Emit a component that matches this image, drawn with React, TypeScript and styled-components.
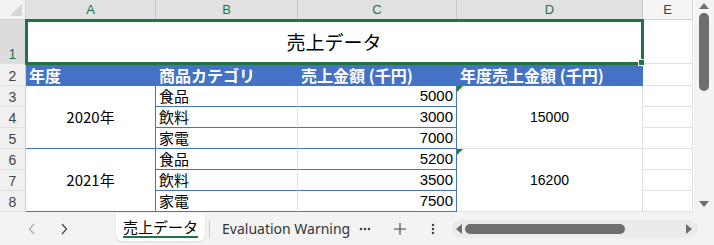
import React from 'react'
import styled, { createGlobalStyle, css } from 'styled-components'

const GlobalStyle = createGlobalStyle`
  html, body { margin: 0; padding: 0; background: #fff; }
  body { font-family: 'Noto Sans CJK JP', 'Noto Sans', sans-serif; }
`

const GRID = '#e1e1e1'
const BLUE = '#4472c4'
const GREEN = '#217346'

const Frame = styled.div`
  width: 714px;
  height: 245px;
  display: flex;
  flex-direction: column;
  overflow: hidden;
`
const Main = styled.div`
  display: flex;
  height: 212px;
`
const Sheet = styled.div`
  display: grid;
  grid-template-columns: 26px 130px 142px 159px 186px 50px;
  grid-template-rows: 20px 44px 22px repeat(6, 21px);
  width: 694px;
  background: #fff;
`
const Corner = styled.div`
  background: #f3f3f3;
  border-right: 1px solid #d0d0d0;
  border-bottom: 1px solid #d0d0d0;
  position: relative;
  &::after {
    content: '';
    position: absolute;
    right: 3px;
    bottom: 3px;
    border-left: 12px solid transparent;
    border-bottom: 12px solid #d6d6d6;
  }
`
const ColHead = styled.div<{ $sel?: boolean }>`
  background: ${(p) => (p.$sel ? '#e1e1e1' : '#f5f5f5')};
  color: ${(p) => (p.$sel ? GREEN : '#444')};
  border-right: 1px solid ${(p) => (p.$sel ? '#c8c8c8' : '#d4d4d4')};
  border-bottom: 1px solid ${(p) => (p.$sel ? '#c8c8c8' : '#d4d4d4')};
  font-family: 'Liberation Sans', sans-serif;
  font-size: 13px;
  display: flex;
  align-items: center;
  justify-content: center;
`
const RowHead = styled.div<{ $sel?: boolean }>`
  background: ${(p) => (p.$sel ? '#dcdcdc' : '#f0f0f0')};
  color: ${(p) => (p.$sel ? GREEN : '#444')};
  border-right: 1px solid #d0d0d0;
  border-bottom: 1px solid #e0e0e0;
  font-family: 'Liberation Sans', sans-serif;
  font-size: 14px;
  display: flex;
  align-items: flex-end;
  justify-content: center;
  padding-bottom: 1px;
  box-sizing: border-box;
`
const Cell = styled.div<{
  $align?: 'left' | 'right' | 'center'
  $right?: string
  $bottom?: string
  $span?: number
}>`
  position: relative;
  box-sizing: border-box;
  border-right: 1px solid ${(p) => p.$right || GRID};
  border-bottom: 1px solid ${(p) => p.$bottom || GRID};
  display: flex;
  align-items: flex-end;
  justify-content: ${(p) =>
    p.$align === 'right' ? 'flex-end' : p.$align === 'center' ? 'center' : 'flex-start'};
  padding: 0 3px;
  font-size: 15px;
  line-height: 20px;
  color: #000;
  white-space: nowrap;
  ${(p) => p.$span && css`grid-row: span ${p.$span}; align-items: center;`}
`
const Num = styled.span<{ $small?: boolean }>`
  font-family: 'Liberation Sans', sans-serif;
  font-size: ${(p) => (p.$small ? '14px' : '15px')};
`
const Title = styled(Cell)`
  grid-column: span 4;
  align-items: center;
  justify-content: center;
  font-size: 19px;
  outline: 3px solid ${GREEN};
  outline-offset: -2px;
  z-index: 1;
  &::after {
    content: '';
    position: absolute;
    right: -3px;
    bottom: -3px;
    width: 5px;
    height: 5px;
    background: ${GREEN};
    border: 1px solid #fff;
  }
`
const HeadCell = styled(Cell)`
  background: ${BLUE};
  color: #fff;
  font-weight: bold;
  font-size: 16px;
  align-items: center;
  border-right-color: ${BLUE};
  border-bottom-color: ${BLUE};
`
const Flag = styled.i`
  position: absolute;
  left: 0;
  top: 0;
  border-right: 6px solid transparent;
  border-top: 6px solid #1a8a1a;
`

const VScroll = styled.div`
  width: 20px;
  background: #f3f3f3;
  display: flex;
  flex-direction: column;
  align-items: center;
  padding: 3px 0 5px;
  box-sizing: border-box;
`
const Arrow = styled.div<{ $dir: 'up' | 'down' | 'left' | 'right' }>`
  width: 0;
  height: 0;
  ${(p) =>
    p.$dir === 'up'
      ? css`border-left: 5px solid transparent; border-right: 5px solid transparent; border-bottom: 6px solid #6e6e6e;`
      : p.$dir === 'down'
      ? css`border-left: 5px solid transparent; border-right: 5px solid transparent; border-top: 6px solid #6e6e6e;`
      : p.$dir === 'left'
      ? css`border-top: 5px solid transparent; border-bottom: 5px solid transparent; border-right: 6px solid #6e6e6e;`
      : css`border-top: 5px solid transparent; border-bottom: 5px solid transparent; border-left: 6px solid #6e6e6e;`}
`
const VThumb = styled.div`
  width: 10px;
  height: 78px;
  background: #6e6e6e;
  border-radius: 5px;
  margin-top: 4px;
`
const Spacer = styled.div<{ $w?: number }>`
  flex: ${(p) => (p.$w ? `0 0 ${p.$w}px` : '1')};
`

const TabBar = styled.div`
  height: 33px;
  background: #f3f3f3;
  display: flex;
  align-items: center;
  font-size: 14px;
  color: #333;
`
const NavBtn = styled.div<{ $dim?: boolean }>`
  width: 32px;
  display: flex;
  justify-content: center;
  color: ${(p) => (p.$dim ? '#aaa' : '#444')};
`
const Tab = styled.div`
  height: 28px;
  margin-top: -4px;
  padding: 0 7px;
  display: flex;
  align-items: center;
  position: relative;
  font-size: 15px;
  color: #000;
  background: #fff;
  border-radius: 0 0 6px 6px;
  box-shadow: 0 1px 2px rgba(0, 0, 0, 0.12);
  &::after {
    content: '';
    position: absolute;
    left: 7px;
    right: 7px;
    bottom: 3px;
    height: 2px;
    background: ${GREEN};
  }
`
const TabText = styled.span`
  font-family: 'Noto Sans', 'Noto Sans CJK JP', sans-serif;
  font-size: 14px;
  color: #333;
  margin-left: 12px;
`
const Sep = styled.div`
  width: 1px;
  height: 18px;
  background: #c8c8c8;
  margin-left: 4px;
`
const IconBtn = styled.div<{ $w: number }>`
  width: ${(p) => p.$w}px;
  display: flex;
  justify-content: center;
  align-items: center;
  color: #444;
`
const HScroll = styled.div`
  margin-left: 6px;
  width: 246px;
  height: 18px;
  background: #ebebeb;
  border-radius: 9px;
  display: flex;
  align-items: center;
  padding: 0 6px 0 4px;
  box-sizing: border-box;
  gap: 3px;
`
const HThumb = styled.div`
  width: 160px;
  height: 10px;
  background: #6e6e6e;
  border-radius: 5px;
`

const cols = ['A', 'B', 'C', 'D', 'E']
const years = [
  { year: '2020年', total: '15000', rows: [['食品', '5000'], ['飲料', '3000'], ['家電', '7000']] },
  { year: '2021年', total: '16200', rows: [['食品', '5200'], ['飲料', '3500'], ['家電', '7500']] },
]

const App: React.FC = () => {
  return (
    <Frame>
      <GlobalStyle />
      <Main>
        <Sheet>
          <Corner />
          {cols.map((c, i) => (
            <ColHead key={c} $sel={i < 4}>
              {c}
            </ColHead>
          ))}

          <RowHead $sel>1</RowHead>
          <Title>売上データ</Title>
          <Cell />

          <RowHead>2</RowHead>
          <HeadCell>年度</HeadCell>
          <HeadCell>商品カテゴリ</HeadCell>
          <HeadCell>売上金額 (千円)</HeadCell>
          <HeadCell>年度売上金額 (千円)</HeadCell>
          <Cell />

          {years.map((y, yi) =>
            y.rows.map(([cat, amt], ri) => {
              const n = 3 + yi * 3 + ri
              return (
                <React.Fragment key={n}>
                  <RowHead>{n}</RowHead>
                  {ri === 0 && (
                    <Cell $span={3} $align="center" $right={BLUE} $bottom={BLUE}>
                      {y.year}
                    </Cell>
                  )}
                  <Cell $right={GRID} $bottom={BLUE}>
                    {cat}
                  </Cell>
                  <Cell $align="right" $right={BLUE} $bottom={BLUE}>
                    <Num>{amt}</Num>
                  </Cell>
                  {ri === 0 && (
                    <Cell $span={3} $align="center">
                      <Flag />
                      <Num $small>{y.total}</Num>
                    </Cell>
                  )}
                  <Cell />
                </React.Fragment>
              )
            })
          )}
        </Sheet>
        <VScroll>
          <Arrow $dir="up" />
          <VThumb />
          <Spacer />
          <Arrow $dir="down" />
        </VScroll>
      </Main>
      <TabBar>
        <Spacer $w={16} />
        <NavBtn $dim>
          <svg width="8" height="12" viewBox="0 0 8 12">
            <path d="M6 1 L1.5 6 L6 11" fill="none" stroke="currentColor" strokeWidth="1.2" />
          </svg>
        </NavBtn>
        <NavBtn>
          <svg width="8" height="12" viewBox="0 0 8 12">
            <path d="M2 1 L6.5 6 L2 11" fill="none" stroke="currentColor" strokeWidth="1.2" />
          </svg>
        </NavBtn>
        <Spacer $w={36} />
        <Tab>売上データ</Tab>
        <Sep />
        <TabText>Evaluation Warning</TabText>
        <IconBtn $w={30}>
          <svg width="12" height="4" viewBox="0 0 12 4">
            <circle cx="2" cy="2" r="1.3" fill="currentColor" />
            <circle cx="6" cy="2" r="1.3" fill="currentColor" />
            <circle cx="10" cy="2" r="1.3" fill="currentColor" />
          </svg>
        </IconBtn>
        <IconBtn $w={40}>
          <svg width="12" height="12" viewBox="0 0 12 12">
            <path d="M6 0 V12 M0 6 H12" stroke="currentColor" strokeWidth="1.1" />
          </svg>
        </IconBtn>
        <IconBtn $w={26}>
          <svg width="4" height="12" viewBox="0 0 4 12">
            <circle cx="2" cy="2" r="1.2" fill="currentColor" />
            <circle cx="2" cy="6" r="1.2" fill="currentColor" />
            <circle cx="2" cy="10" r="1.2" fill="currentColor" />
          </svg>
        </IconBtn>
        <HScroll>
          <Arrow $dir="left" />
          <HThumb />
          <Spacer />
          <Arrow $dir="right" />
        </HScroll>
      </TabBar>
    </Frame>
  )
}
export default App
